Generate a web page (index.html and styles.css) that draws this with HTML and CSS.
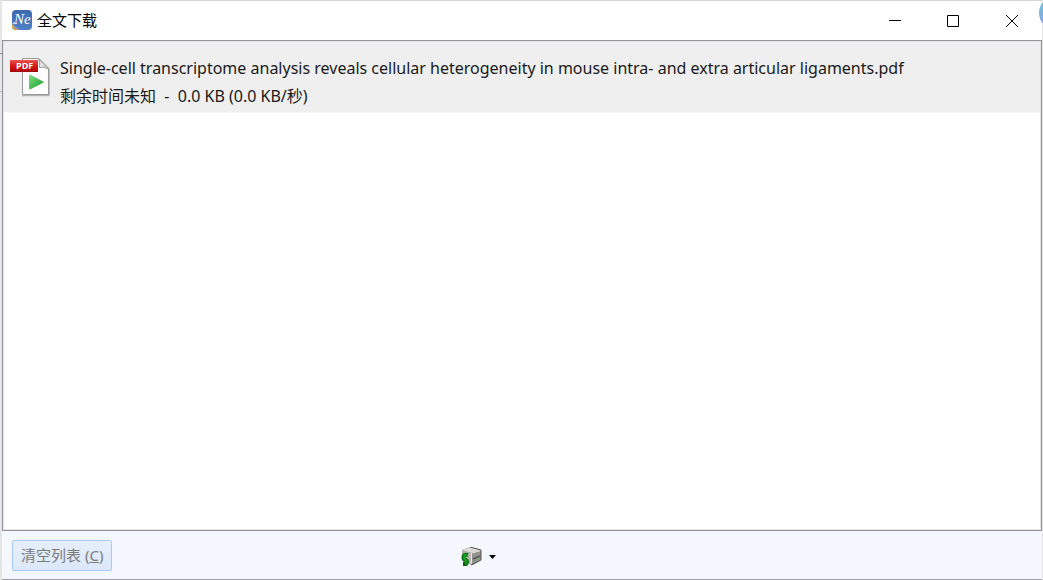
FILE: index.html
```html
<!DOCTYPE html>
<html lang="zh-CN">
  <head>
    <meta charset="UTF-8" />
    <meta name="viewport" content="width=device-width, initial-scale=1.0" />
    <title>全文下载</title>
    <link rel="stylesheet" href="styles.css">
  </head>
  <body>
    <div class="window">
      <header class="titlebar">
        <svg class="app-icon" viewBox="0 0 20 20" aria-hidden="true">
          <defs>
            <linearGradient id="appBlue" x1="0" y1="0" x2="0" y2="1">
              <stop offset="0" stop-color="#3c68ae" />
              <stop offset="1" stop-color="#5180c4" />
            </linearGradient>
          </defs>
          <rect width="20" height="20" rx="4" fill="url(#appBlue)" />
          <path d="M0 14Q2 18 6 20H4Q0 20 0 16Z" fill="#eda23a" />
          <path d="M0 13Q3 18 7 20" fill="none" stroke="#a9bcdb" stroke-width="0.8" />
          <path d="M1 13Q2 14 3 12" fill="none" stroke="#dfe6f2" />
          <text class="app-mark" x="2" y="14">Ne</text>
        </svg>
        <h1 class="title">全文下载</h1>
        <div class="window-controls">
          <button class="control" aria-label="最小化">
            <svg width="13" height="13" viewBox="0 0 13 13"><path d="M0 6.5H12" /></svg>
          </button>
          <button class="control" aria-label="最大化">
            <svg width="13" height="13" viewBox="0 0 13 13"><path d="M.5 1.500H11.500V12.500H.5Z" /></svg>
          </button>
          <button class="control" aria-label="关闭">
            <svg width="13" height="13" viewBox="0 0 13 13"><path d="M1 1L13 13M13 1L1 13" /></svg>
          </button>
        </div>
      </header>

      <main class="downloads">
        <div class="download">
          <svg class="file-icon" viewBox="0 0 40 42" aria-hidden="true">
            <defs>
              <linearGradient id="pdfRed" x1="0" y1="0" x2="0" y2="1">
                <stop offset="0" stop-color="#ee5550" />
                <stop offset="0.45" stop-color="#d51b1b" />
                <stop offset="1" stop-color="#b80000" />
              </linearGradient>
              <linearGradient id="playGreen" x1="0" y1="0" x2="1" y2="1">
                <stop offset="0" stop-color="#86dd84" />
                <stop offset="1" stop-color="#119d24" />
              </linearGradient>
              <linearGradient id="fold" x1="0" y1="1" x2="1" y2="0">
                <stop offset="0" stop-color="#fff" />
                <stop offset="1" stop-color="#bbb" />
              </linearGradient>
            </defs>
            <path d="M12 39.500H39V13" fill="none" stroke="#b3b3b3" stroke-width="1.500" />
            <path d="M12.500 2.500H29L38.500 12V38.500H12.500Z" fill="#fdfdfd" stroke="#999" />
            <path d="M28.500 2.500Q30.500 7 29.500 11.500Q34 10 38.500 13Z" fill="url(#fold)" stroke="#999" />
            <rect x="0" y="4" width="28" height="12" fill="url(#pdfRed)" />
            <path d="M0 15.500H28" stroke="#990b0b" />
            <text class="pdf-mark" x="6" y="13">PDF</text>
            <path d="M20 18.500Q19 18.500 19 20V32Q19 34 21 33L33.500 26.500Q34 26 33 25.500Z" fill="url(#playGreen)" />
          </svg>
          <div class="details">
            <div class="file-name">Single-cell transcriptome analysis reveals cellular heterogeneity in mouse intra- and extra articular ligaments.pdf</div>
            <div class="status">剩余时间未知&nbsp; -&nbsp; 0.0 KB (0.0 KB/秒)</div>
          </div>
        </div>
      </main>

      <footer class="toolbar">
        <button class="clear-button" accesskey="c" disabled>清空列表 (<u>C</u>)</button>
        <button class="menu-button" aria-label="下载完成后">
          <svg width="22" height="20" viewBox="0 0 22 20">
            <path d="M1 3L9 0L20 3L20 13L12 18L2 14Z" fill="#85827f" />
            <path d="M1 3L9 0L20 3L10 6Z" fill="#dddbd8" />
            <path d="M10 6L20 3V13L10 18Z" fill="#94918e" />
            <path d="M1 3L10 6V18L2 14Z" fill="#b7b5b2" />
            <path d="M10.500 6V17M11 6L20 3.500" fill="none" stroke="#e9e7e4" />
            <path d="M12 12L19 9" fill="none" stroke="#5b5957" stroke-width="1.500" />
            <path d="M10 18L20 13V3L9 0" fill="none" stroke="#555351" />
            <path d="M17 12L19 11" stroke="#52c64a" />
            <path d="M7 8Q2 7 2.500 11Q3 13 5 13Q7 14 5 17H2" fill="none" stroke="#0b6810" stroke-width="4" />
            <path d="M6.500 8Q2.500 7 3 11Q4 13 5.500 13.500Q6 15 4.500 17" fill="none" stroke="#18a41d" stroke-width="2" />
          </svg>
          <svg width="7" height="4" viewBox="0 0 7 4"><path d="M0 0H7L3.500 4Z" fill="#000" /></svg>
        </button>
      </footer>
    </div>
    <div class="bubble"></div>
  </body>
</html>
```

FILE: styles.css
```css
* {
  box-sizing: border-box;
}
body {
  margin: 0;
  overflow: hidden;
  /* edges of the window behind, visible in the left gutter */
  background:
    linear-gradient(#8a8a8a, #8a8a8a) 0 53px / 2px 1px no-repeat,
    linear-gradient(#bbb, #bbb) 0 91px / 2px 1px no-repeat,
    #e5e5e5;
  font-family: "Noto Sans", "Noto Sans CJK SC", sans-serif;
  color: #1a1a1a;
}
button {
  padding: 0;
  border: none;
  background: none;
  font-family: inherit;
}
svg {
  display: block;
  flex: none;
}
.window {
  display: flex;
  flex-direction: column;
  height: 100vh;
  margin: 0 1px 0 2px;
  border-top: 1px solid #d5d5d5;
  border-bottom: 1px solid #a0a1a7;
  background-color: #fff;
}
.titlebar {
  display: flex;
  align-items: center;
  height: 39px;
  padding: 0 2px 1px 10px;
}
.app-icon {
  width: 20px;
  height: 20px;
}
.app-mark {
  fill: #fff;
  font-family: "Liberation Serif", serif;
  font-size: 15px;
  font-style: italic;
}
.title {
  margin: 0 auto 0 5px;
  font-family: "Noto Sans CJK SC", sans-serif;
  font-size: 15px;
  line-height: 20px;
  font-weight: normal;
  color: #000;
}
.window-controls {
  display: flex;
}
.control {
  display: flex;
  align-items: center;
  justify-content: center;
  width: 58px;
  height: 37px;
}
.control path {
  fill: none;
  stroke: #000;
}
.downloads {
  flex: 1;
  border: 1px solid #94959b;
  box-shadow: inset 0 0 0 1px #e3e3e6;
  padding: 1px;
  overflow: auto;
}
.download {
  display: flex;
  gap: 10px;
  height: 71px;
  padding: 12px 6px 0;
  border-bottom: 1px dotted #fff;
  background-color: #efefef;
}
.file-icon {
  width: 40px;
  height: 42px;
  margin-top: 2px;
}
.pdf-mark {
  fill: #fff;
  font-family: "Open Sans", sans-serif;
  font-size: 9px;
  font-weight: bold;
}
.details {
  font-size: 16px;
  line-height: 28px;
  white-space: nowrap;
}
.file-name,
.status {
  height: 28px;
}
.toolbar {
  display: grid;
  grid-template-columns: 44fr 56fr;
  align-items: center;
  height: 48px;
  padding: 0 10px;
  background-color: #f4f8fe;
}
.clear-button {
  justify-self: start;
  height: 31px;
  padding: 0 8px;
  border: 1px solid #a6caf3;
  border-radius: 2px;
  background: linear-gradient(#e6effb, #dce8fb);
  font-size: 15px;
  line-height: 20px;
  color: #7b7b7b;
}
.menu-button {
  display: flex;
  align-items: center;
  justify-self: start;
  gap: 6px;
  padding-top: 4px;
}
/* floating widget peeking in at the window edge */
.bubble {
  position: absolute;
  top: -4px;
  right: -30px;
  width: 34px;
  height: 34px;
  border-radius: 50%;
  background: linear-gradient(#68cbd8, #8c9be8);
}
```
